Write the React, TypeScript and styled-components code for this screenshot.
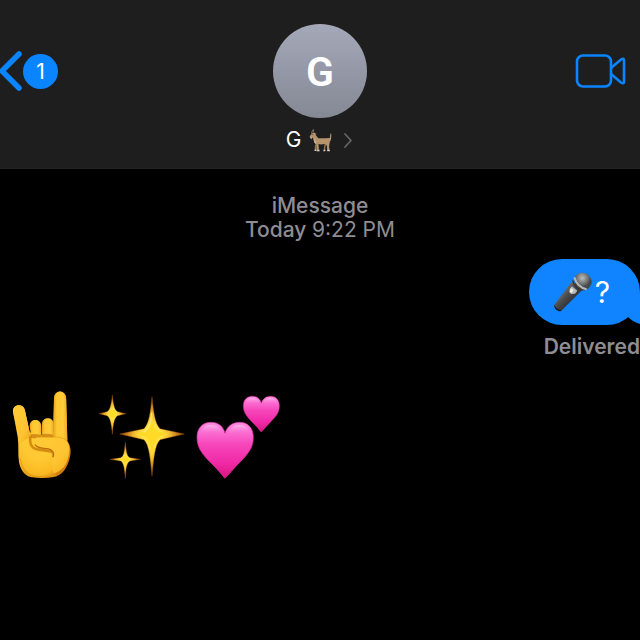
import React from "react";
import styled, { createGlobalStyle } from "styled-components";

const GlobalStyle = createGlobalStyle`
  * { box-sizing: border-box; }
  body {
    margin: 0;
    background: #000;
    color: #fff;
    font-family: Inter, "Liberation Sans", sans-serif;
    overflow-x: hidden;
  }
  button {
    border: 0;
    padding: 0;
    background: none;
    color: inherit;
    font: inherit;
    cursor: pointer;
  }
  svg { display: block; flex: none; }
`;

const Screen = styled.div`
  min-height: 100vh;
  background: #000;
`;

const Header = styled.header`
  display: grid;
  grid-template-columns: 1fr auto 1fr;
  align-items: start;
  padding: 24px 0 16px;
  background: #1e1e1e;
  border-bottom: 1px solid #242425;
`;

const BackButton = styled.button`
  display: flex;
  align-items: center;
  height: 94px;
  justify-self: start;
`;

const Badge = styled.span`
  display: flex;
  align-items: center;
  justify-content: center;
  width: 35px;
  height: 35px;
  padding-top: 2px;
  border-radius: 50%;
  background: #0a84ff;
  font-size: 21px;
  line-height: 24px;
`;

const ContactButton = styled.button`
  display: flex;
  flex-direction: column;
  align-items: center;
  gap: 10px;
`;

const Avatar = styled.span`
  display: flex;
  align-items: center;
  justify-content: center;
  width: 94px;
  height: 94px;
  border-radius: 50%;
  background: linear-gradient(#a4a8b8, #858995);
  font-family: Roboto, "Liberation Sans", sans-serif;
  font-size: 41px;
  font-weight: 600;
  line-height: 48px;
  padding-top: 2px;
`;

const ContactName = styled.span`
  display: flex;
  align-items: center;
  gap: 8px;
  font-size: 21px;
  line-height: 24px;
`;

const VideoButton = styled.button`
  display: flex;
  align-items: center;
  height: 94px;
  justify-self: end;
  padding-right: 14px;
`;

const Thread = styled.main`
  display: flex;
  flex-direction: column;
  padding-top: 25px;
`;

const Timestamp = styled.div`
  display: flex;
  flex-direction: column;
  align-items: center;
  color: #8e8d93;
  font-size: 21px;
  line-height: 24px;
  font-weight: 500;
`;

const Time = styled.span`
  font-weight: 400;
`;

const Outgoing = styled.div`
  display: flex;
  flex-direction: column;
  align-items: flex-end;
  gap: 10px;
  margin-top: 17px;
`;

const Bubble = styled.div`
  position: relative;
  display: flex;
  align-items: center;
  gap: 3px;
  height: 66px;
  padding: 0 30px 0 25px;
  border-radius: 33px;
  background: #0f84fe;
  font-size: 30px;
  line-height: 36px;
`;

const Tail = styled.svg`
  position: absolute;
  right: 0;
  bottom: 0;
`;

const Status = styled.div`
  color: #8e8d93;
  font-size: 21px;
  line-height: 24px;
  font-weight: 600;
`;

const Incoming = styled.div`
  display: flex;
  margin-top: 30px;
`;

const Goat = () => (
  <svg width="23" height="23" viewBox="0 0 72 72" role="img" aria-label="goat">
    <path d="M9 16C8 8 10 3 15 2c-2 4-2 8-1 12" fill="none" stroke="#8e7960" strokeWidth="3" />
    <path d="M16 12l8 3-5 5z" fill="#8b6949" />
    <path d="M10 13l8-1 4 8 7 9c12 1 25-1 36-1l2-14 3 1-1 18-4 8-2 12 1 16h-7l-1-17-8-5c-7 2-13 2-18 0l1 23h-7l-2-22-7-11-3-10-8 1-2-5z" fill="#b5946e" />
    <path d="M26 46l-4 11 1 10h-5V55l4-13zM55 47l-4 9v12h-5l1-12 2-10z" fill="#957650" />
    <path d="M3 24l6 3-2 6zM18 64h5v5h-6zM27 65h6v5h-7zM46 65h5v5h-6zM58 65h7v5h-8z" fill="#d6d1ca" />
    <path d="M15 28l8 13 1 8-8-7z" fill="#d0ad86" />
    <circle cx="12" cy="18" r="1.5" fill="#302820" />
  </svg>
);

const Microphone = () => (
  <svg width="38" height="40" viewBox="0 0 114 120" role="img" aria-label="microphone">
    <defs>
      <linearGradient id="micBody" x1="0" y1="0" x2="1" y2="1">
        <stop offset=".25" stopColor="#77797b" /><stop offset=".48" stopColor="#48494b" /><stop offset=".75" stopColor="#252729" />
      </linearGradient>
      <radialGradient id="micHead" cx=".45" cy=".3">
        <stop offset="0" stopColor="#b9b9b7" /><stop offset=".55" stopColor="#747677" /><stop offset="1" stopColor="#383b3f" />
      </radialGradient>
      <pattern id="micMesh" width="5" height="5" patternUnits="userSpaceOnUse" patternTransform="rotate(35)">
        <path d="M0 0h5M0 0v5" stroke="#dedede" strokeOpacity=".4" strokeWidth="1" />
      </pattern>
    </defs>
    <path d="M1 98L53 29c8 3 25 17 29 27L22 116C14 118 0 108 1 98z" fill="url(#micBody)" />
    <path d="M1 98c3 9 11 16 21 17l-2 3C10 119-1 109 1 98z" fill="#171a1c" />
    <path d="M64 13C73 0 90-1 102 8c13 11 15 27 4 38-5 7-14 11-23 9C68 52 57 36 64 13z" fill="url(#micHead)" />
    <path d="M64 13C73 0 90-1 102 8c13 11 15 27 4 38-5 7-14 11-23 9C68 52 57 36 64 13z" fill="url(#micMesh)" />
    <path d="M61 16c4 17 18 32 37 36" fill="none" stroke="#b8b9b7" strokeWidth="6" />
    <path d="M56 25c3 13 13 25 29 30" fill="none" stroke="#303337" strokeWidth="4" />
    <path d="M47 51l7-8 16 13-7 9-12 1-5-5z" fill="#b8bab9" />
    <path d="M51 49l7 5-4 8-7-3z" fill="#f0f0ed" />
  </svg>
);

const Horns = () => (
  <svg width="90" height="90" viewBox="0 30 270 270" role="img" aria-label="sign of the horns">
    <defs>
      <linearGradient id="skin" x1="0" y1="0" x2="1" y2="1">
        <stop offset="0" stopColor="#ffcb36" /><stop offset=".65" stopColor="#ffc431" /><stop offset="1" stopColor="#edaa1c" />
      </linearGradient>
      <linearGradient id="finger" x1="0" y1="0" x2="1" y2="0">
        <stop offset="0" stopColor="#e9a51d" /><stop offset=".25" stopColor="#ffc832" /><stop offset=".7" stopColor="#ffcb38" /><stop offset="1" stopColor="#eba927" />
      </linearGradient>
      <radialGradient id="palm" cx=".45" cy=".45" r=".6">
        <stop offset=".55" stopColor="#ffc933" /><stop offset=".85" stopColor="#f9b922" /><stop offset="1" stopColor="#cf7c0b" />
      </radialGradient>
      <filter id="handBlur"><feGaussianBlur stdDeviation="2" /></filter>
    </defs>
    <path d="M39 99c-3-25 32-27 36-4l14 65 70 18 3-118c1-29 36-29 37 0l3 127c10 13 12 31 8 46-7 32-22 57-52 62q-34 5-67-1c-18-4-30-23-34-45-4-24 0-50-4-76z" fill="url(#palm)" />
    <path d="M39 99c-3-25 32-27 36-4l17 78-35 20-4-37z" fill="url(#skin)" />
    <path d="M162 58c1-27 35-27 36 0l4 126-42-5z" fill="url(#finger)" />
    <path d="M89 141c0-23 33-24 35-1l1 36H94z" fill="url(#finger)" />
    <path d="M126 134c0-22 35-22 35 0l-1 44h-34z" fill="url(#finger)" />
    <path d="M90 167q12-5 34 2v10l-30-2zM126 166q17-5 34 2l-2 12h-30z" fill="#c87b0b" opacity=".75" filter="url(#handBlur)" />
    <path d="M91 172q-5 38 27 40l34 5c8 3 10 8 8 17" fill="none" stroke="#c06c04" strokeWidth="8" opacity=".65" filter="url(#handBlur)" />
    <path d="M115 175h58c27 1 40 23 33 54-5 29-20 49-46 54l-6-50c12-14-3-25-16-25-15 0-34-3-36-17-1-10 5-16 13-16z" fill="url(#skin)" />
    <path d="M104 178l6-4h60c17 1 27 7 34 16" fill="none" stroke="#de8f13" strokeWidth="2" opacity=".8" />
    <path d="M105 197c7 11 22 11 37 12 15 2 23 13 16 26" fill="none" stroke="#bc6f0b" strokeWidth="4" />
    <path d="M60 238c6 31 18 45 34 51 25 5 55 5 75-1" fill="none" stroke="#e29915" strokeWidth="4" opacity=".7" filter="url(#handBlur)" />
  </svg>
);

const Sparkles = () => (
  <svg width="95" height="90" viewBox="0 30 285 270" role="img" aria-label="sparkles">
    <defs>
      <radialGradient id="star">
        <stop offset="0" stopColor="#ffd829" /><stop offset=".28" stopColor="#ffe348" /><stop offset=".58" stopColor="#eeb52e" /><stop offset="1" stopColor="#913b0c" />
      </radialGradient>
      <filter id="starBlur"><feGaussianBlur stdDeviation="1.5" /></filter>
    </defs>
    <g transform="translate(15 0)">
      <g fill="url(#star)" stroke="#b15f12" strokeWidth="1">
        <path d="M52 48c3 30 7 46 16 50l25 6-25 6c-9 5-13 21-16 56-3-35-7-51-16-56l-24-6 24-6c9-4 13-20 16-50z" />
        <path d="M91 190c3 31 5 43 14 46l31 5-31 5c-10 5-12 20-14 52-3-32-5-47-14-52l-32-5 32-5c9-3 11-15 14-46z" />
        <path d="M171 53c5 50 9 80 24 96l73 16-73 17c-16 16-19 59-24 110-5-51-8-94-24-110l-73-17 73-16c15-16 19-46 24-96z" />
      </g>
      <path d="M171 96c2 32 5 53 17 61l35 8-36 10c-10 7-14 38-16 72-2-34-6-65-16-72l-36-10 35-8c12-8 15-29 17-61z" fill="#ffda28" filter="url(#starBlur)" />
      <path d="M170 101c-2 29-8 51-24 59" fill="none" stroke="#fff28e" strokeWidth="3" filter="url(#starBlur)" />
      <circle cx="52" cy="104" r="10" fill="#ffda28" filter="url(#starBlur)" />
      <circle cx="91" cy="241" r="9" fill="#ffda28" filter="url(#starBlur)" />
    </g>
  </svg>
);

const Hearts = () => (
  <svg width="100" height="90" viewBox="0 30 300 270" role="img" aria-label="two hearts">
    <defs>
      <linearGradient id="heart" x1="0" y1="0" x2="0" y2="1">
        <stop offset="0" stopColor="#fc91e0" /><stop offset=".18" stopColor="#fa6cd1" /><stop offset=".4" stopColor="#f646ba" /><stop offset=".72" stopColor="#f12aa8" /><stop offset="1" stopColor="#d9157d" />
      </linearGradient>
      <linearGradient id="gloss" x1="0" y1="0" x2="0" y2="1">
        <stop offset="0" stopColor="#ffc6f0" stopOpacity=".7" /><stop offset="1" stopColor="#fb66cb" stopOpacity="0" />
      </linearGradient>
      <filter id="heartBlur"><feGaussianBlur stdDeviation="2" /></filter>
      <g id="heartShape">
        <path d="M84 169C75 159 62 142 36 117 12 92 0 74 0 46 0 19 16 1 42 1c23 0 37 13 42 33C90 14 105 1 128 1c26 0 41 18 41 45 0 29-13 47-37 71-24 25-38 42-48 52z" fill="url(#heart)" stroke="#e52b9f" strokeWidth="2" />
        <path d="M10 36C14 16 25 9 42 9c19 0 32 10 37 29-21-9-45-10-69-2zM91 38c5-19 18-29 36-29 18 0 28 10 33 27-25-8-48-7-69 2z" fill="url(#gloss)" filter="url(#heartBlur)" />
      </g>
    </defs>
    <use href="#heartShape" transform="translate(36 129)" />
    <use href="#heartShape" transform="translate(175 51) scale(.64)" />
  </svg>
);

export default function App() {
  return (
    <>
      <GlobalStyle />
      <Screen>
        <Header>
          <BackButton aria-label="Back, 1 unread">
            <svg width="23" height="42" viewBox="0 0 23 42">
              <path d="M19 4L2 21l17 17" fill="none" stroke="#0a84ff" strokeWidth="5.5" strokeLinecap="round" strokeLinejoin="round" />
            </svg>
            <Badge>1</Badge>
          </BackButton>
          <ContactButton>
            <Avatar>G</Avatar>
            <ContactName>
              G
              <Goat />
              <svg width="14" height="18" viewBox="-4 0 14 18">
                <path d="M1 3l6 6.5L1 16" fill="none" stroke="#646467" strokeWidth="1.8" strokeLinecap="round" strokeLinejoin="round" />
              </svg>
            </ContactName>
          </ContactButton>
          <VideoButton aria-label="Video call">
            <svg width="51" height="36" viewBox="0 0 51 36" fill="none" stroke="#0a84ff" strokeWidth="2.6" strokeLinejoin="round">
              <rect x="2" y="2.5" width="34" height="31" rx="6" />
              <path d="M36 15L46 6.5q3-2 3 1v21q0 3-3 1L36 21" />
            </svg>
          </VideoButton>
        </Header>
        <Thread>
          <Timestamp>
            <span>iMessage</span>
            <span>Today <Time>9:22 PM</Time></span>
          </Timestamp>
          <Outgoing>
            <Bubble>
              <Microphone />
              <span>?</span>
              <Tail width="12" height="33" viewBox="0 0 12 33">
                <path d="M0 25Q5 30 12 32V0L6 12z" fill="#0f84fe" />
              </Tail>
            </Bubble>
            <Status>Delivered</Status>
          </Outgoing>
          <Incoming>
            <Horns />
            <Sparkles />
            <Hearts />
          </Incoming>
        </Thread>
      </Screen>
    </>
  );
}
